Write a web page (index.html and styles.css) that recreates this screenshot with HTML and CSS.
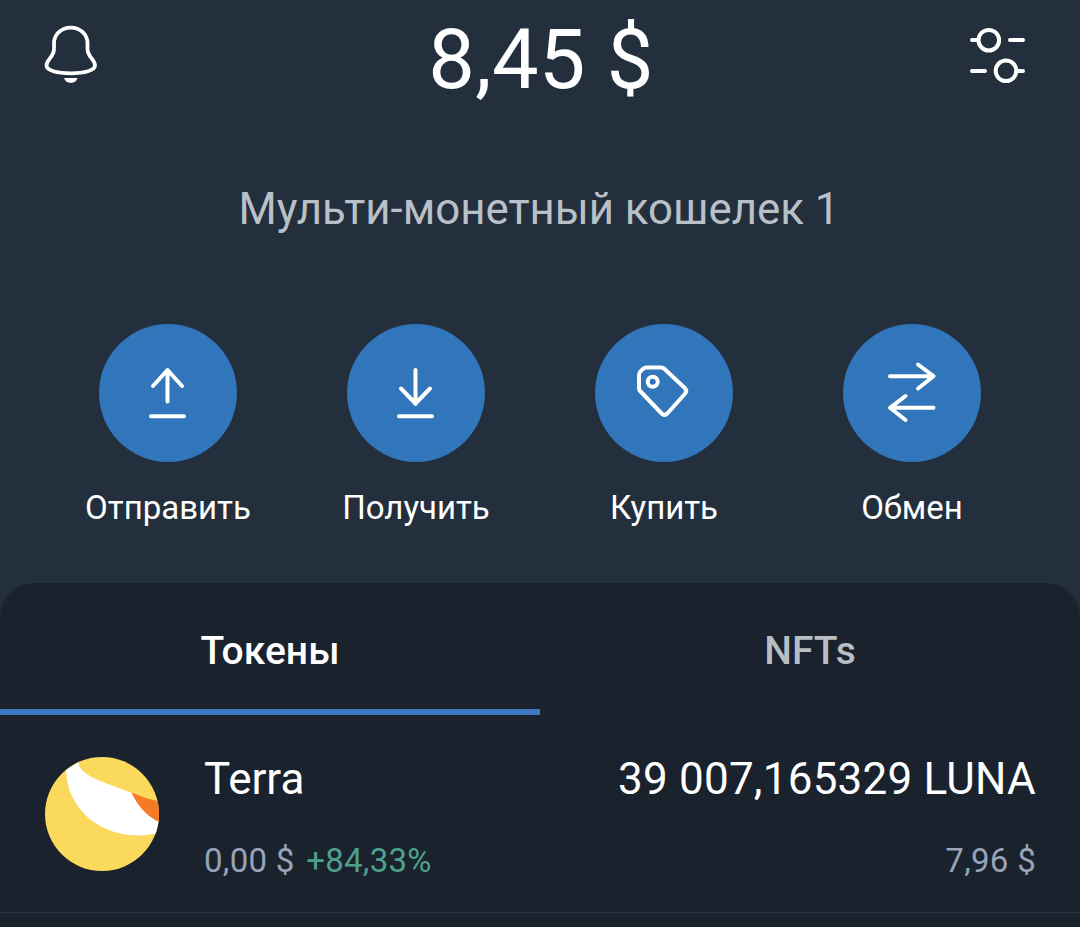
FILE: index.html
```
<!DOCTYPE html>
<html lang="ru">

<head>
  <meta charset="UTF-8">
  <meta name="viewport" content="width=device-width, initial-scale=1.0">
  <title>Кошелек</title>
  <link rel="stylesheet" href="styles.css">
</head>

<body>
  <div class="wallet">
    <header class="header">
      <button class="icon-btn">
        <svg width="60" height="60" viewBox="10 14 60 60" fill="none" stroke="#fff" stroke-width="3.8">
          <path d="M40.8 17.6c-9.6 0-16.8 7-16.8 15.8v5.6c0 8-7.5 10.4-7.5 16.6 0 4.8 10.4 7.7 24.2 7.7s24.3-2.9 24.3-7.7c0-6.2-7.5-8.6-7.5-16.6v-5.6c0-8.8-7.1-15.8-16.7-15.8z" />
          <path d="M34 68h13.6c-1 3.2-3.4 4.9-6.8 4.9s-5.8-1.7-6.8-4.9z" fill="#fff" stroke="none" />
        </svg>
      </button>
      <h1 class="balance">8,45 $</h1>
      <button class="icon-btn">
        <svg width="60" height="60" viewBox="18 14 60 60" fill="none" stroke="#fff" stroke-width="4" stroke-linecap="round">
          <circle cx="38.8" cy="30.2" r="10.3" />
          <path d="M22 30.1h5M60 30.1h13" />
          <circle cx="56" cy="60.8" r="10.3" />
          <path d="M22 61h13M68 61h5" />
        </svg>
      </button>
    </header>

    <div class="wallet-name">Мульти-монетный кошелек 1</div>

    <ul class="actions">
      <li>
        <button class="circle">
          <svg viewBox="0 0 138 138">
            <path d="M68.5 77.5V46M54 62L68.5 46L83 62M52 92.3h33" />
          </svg>
        </button>
        <span>Отправить</span>
      </li>
      <li>
        <button class="circle">
          <svg viewBox="0 0 138 138">
            <path d="M68.5 46V80M54 64.5L68.5 79.5L83 64.5M52 92.3h33" />
          </svg>
        </button>
        <span>Получить</span>
      </li>
      <li>
        <button class="circle">
          <svg viewBox="0 0 138 138">
            <path d="M51.5 43.5h14.500q2 0 3.500 1.500l20.300 19q2.800 3 0 6l-17.500 19.500q-2.800 2.800-5.700 0l-21-22q-1.600-1.600-1.600-3.600v-13q0-2 1.500-3.500l2.500-2.500q1.500-1.400 3.500-1.400z" />
            <circle cx="57.7" cy="57.8" r="5" />
          </svg>
        </button>
        <span>Купить</span>
      </li>
      <li>
        <button class="circle">
          <svg viewBox="0 0 138 138">
            <path d="M47 52.2h43M75 40.5L90.5 52.2L75 64.5" />
            <path d="M90.5 83.8h-43M62.5 72L47 83.8L62.5 96" />
          </svg>
        </button>
        <span>Обмен</span>
      </li>
    </ul>

    <section class="assets">
      <nav class="tabs">
        <a class="active" href="#tokens">Токены</a>
        <a href="#nfts">NFTs</a>
      </nav>

      <div class="token">
        <svg class="token-logo" viewBox="0 0 114 114">
          <clipPath id="coin">
            <circle cx="57" cy="57" r="57" />
          </clipPath>
          <g clip-path="url(#coin)">
            <rect width="114" height="114" fill="#fbd95d" />
            <path d="M21 13L33 5C34 13 42 18 55 24L87 36L116 66V76C105 78 96 79 85 78C51 75 22 50 21 13z" fill="#fff" />
            <path d="M86.5 35.5Q101 42 116 45V66Q96 57 86.5 35.5z" fill="#f47a25" />
          </g>
        </svg>
        <div class="token-info">
          <div class="line">
            <span>Terra</span>
            <span class="amount">39 007,165329 LUNA</span>
          </div>
          <div class="line sub">
            <span>0,00 $ <em>+84,33%</em></span>
            <span>7,96 $</span>
          </div>
        </div>
      </div>
    </section>
  </div>
</body>

</html>
```

FILE: styles.css
```
* {
  box-sizing: border-box;
}

body {
  margin: 0;
  background: #232f3c;
  color: #fff;
  font-family: Roboto, "Noto Sans", sans-serif;
}

button {
  padding: 0;
  border: none;
  background: none;
  cursor: pointer;
}

.wallet {
  display: flex;
  flex-direction: column;
  height: 927px;
  overflow: hidden;
}

.header {
  display: grid;
  grid-template-columns: 1fr auto 1fr;
  height: 120px;
  padding: 10px 52px 0 40px;
}

.icon-btn {
  width: 60px;
  height: 60px;
  margin-top: 14px;
}

.icon-btn:last-child {
  justify-self: end;
}

.icon-btn svg {
  display: block;
}

.balance {
  margin: 0 -7px 0 7px;
  font-size: 83px;
  font-weight: 400;
  line-height: 100px;
  letter-spacing: .3px;
}

.wallet-name {
  margin-top: 63px;
  padding-right: 2px;
  font-size: 43.8px;
  line-height: 52px;
  text-align: center;
  color: #b9c0c7;
}

.actions {
  display: grid;
  grid-template-columns: repeat(4, 1fr);
  margin: 89px 0 0;
  padding: 0 44px;
  list-style: none;
}

.actions li {
  display: flex;
  flex-direction: column;
  align-items: center;
  gap: 27px;
  font-size: 33px;
  line-height: 38px;
}

.circle {
  width: 138px;
  height: 138px;
  border-radius: 50%;
  background: #3175bb;
}

.circle svg {
  display: block;
  fill: none;
  stroke: #fff;
  stroke-width: 4;
  stroke-linecap: round;
  stroke-linejoin: round;
}

.assets {
  flex: 1;
  margin-top: 56px;
  border-radius: 34px 34px 0 0;
  background: #1a222d;
}

.tabs {
  display: flex;
}

.tabs a {
  flex: 1;
  height: 132px;
  padding-top: 45px;
  border-bottom: 6px solid transparent;
  font-size: 39px;
  font-weight: 500;
  line-height: 46px;
  text-align: center;
  text-decoration: none;
  color: #b9bec4;
}

.tabs a.active {
  color: #fff;
  border-bottom-color: #3b78bd;
}

.token {
  display: flex;
  align-items: center;
  height: 198px;
  padding: 0 44px 0 45px;
  border-bottom: 1px solid #2a3640;
}

.token-logo {
  width: 114px;
  height: 114px;
  margin-right: 45px;
}

.token-info {
  flex: 1;
  padding-top: 6px;
}

.line {
  display: flex;
  justify-content: space-between;
  font-size: 44px;
  line-height: 52px;
}

.line .amount {
  letter-spacing: .22px;
}

.line.sub {
  margin-top: 37px;
  font-size: 33px;
  line-height: 38px;
  letter-spacing: .3px;
  color: #98a3b8;
}

.line em {
  margin-left: 3px;
  font-style: normal;
  color: #4da18c;
}
```
